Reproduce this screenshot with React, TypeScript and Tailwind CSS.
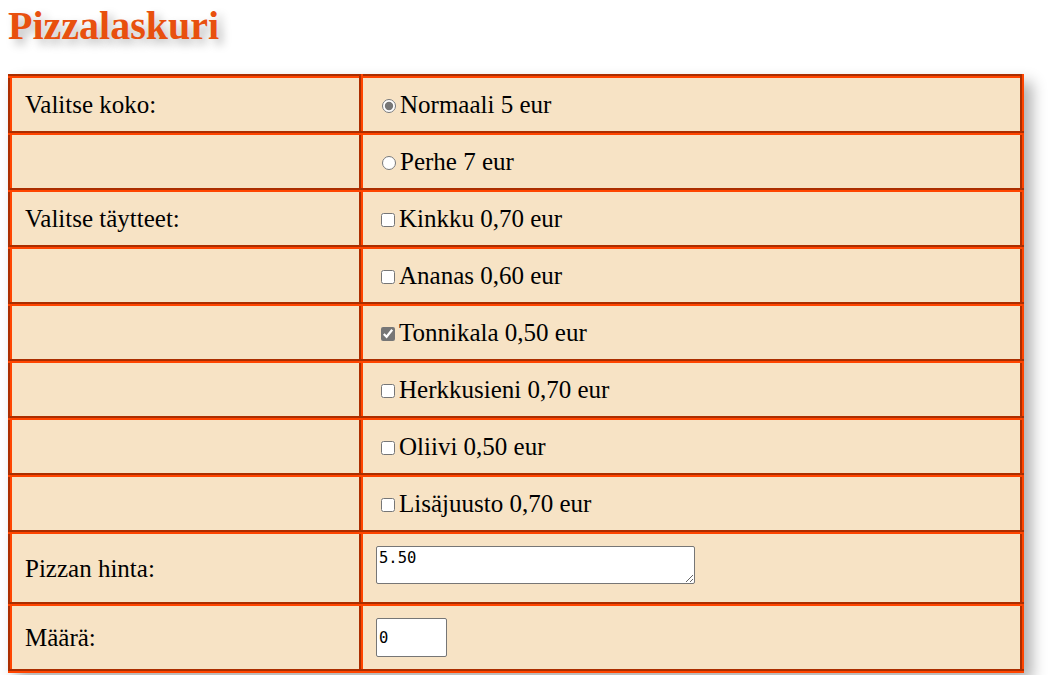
import React from 'react';

const sizes = [
  { label: 'Normaali 5 eur', checked: true },
  { label: 'Perhe 7 eur', checked: false },
];

const toppings = [
  { label: 'Kinkku 0,70 eur', checked: false },
  { label: 'Ananas 0,60 eur', checked: false },
  { label: 'Tonnikala 0,50 eur', checked: true },
  { label: 'Herkkusieni 0,70 eur', checked: false },
  { label: 'Oliivi 0,50 eur', checked: false },
  { label: 'Lisäjuusto 0,70 eur', checked: false },
];

const serif = "font-['Liberation_Serif','Times_New_Roman',serif]";
const cell = `border-4 border-[#ff4500] [border-style:groove] bg-[#f7e3c5] px-[13px] py-[12px] align-middle text-[25px] leading-[29px] font-normal ${serif}`;

export default function App() {
  return (
    <div className={`min-h-screen bg-white px-2 text-black ${serif}`}>
      <h1 className="text-[40px] leading-[52px] font-bold text-[#e8500e] [text-shadow:5px_5px_10px_#b8b8b8]">
        Pizzalaskuri
      </h1>

      <table className={`mt-[22px] w-[1016px] border-collapse shadow-[8px_8px_14px_#b0b0b0] ${serif}`}>
        <tbody>
          {sizes.map((s, i) => (
            <tr key={s.label}>
              <td className={`${cell} w-[351px]`}>{i === 0 ? 'Valitse koko:' : ''}</td>
              <td className={cell}>
                <label>
                  <input
                    type="radio"
                    name="koko"
                    defaultChecked={s.checked}
                    className="mt-[3px] mr-[4px] ml-[6px] h-[14px] w-[14px] accent-[#767676]"
                  />
                  {s.label}
                </label>
              </td>
            </tr>
          ))}

          {toppings.map((t, i) => (
            <tr key={t.label}>
              <td className={cell}>{i === 0 ? 'Valitse täytteet:' : ''}</td>
              <td className={cell}>
                <label>
                  <input
                    type="checkbox"
                    defaultChecked={t.checked}
                    className="my-[3px] mr-[4px] ml-[5px] h-[14px] w-[14px] accent-[#767676]"
                  />
                  {t.label}
                </label>
              </td>
            </tr>
          ))}

          <tr>
            <td className={cell}>Pizzan hinta:</td>
            <td className={cell}>
              <textarea
                readOnly
                defaultValue="5.50"
                className="h-[38px] w-[319px] rounded-[2px] border border-[#767676] bg-white px-[2px] py-[2px] align-baseline font-['DejaVu_Sans_Mono',monospace] text-[15.5px] leading-[18px] text-black"
              />
            </td>
          </tr>

          <tr>
            <td className={cell}>Määrä:</td>
            <td className={cell}>
              <input
                type="text"
                defaultValue="0"
                className="h-[39px] w-[71px] rounded-[2px] border border-[#767676] bg-white px-[2px] align-top font-['DejaVu_Sans_Mono',monospace] text-[15.5px] text-black"
              />
            </td>
          </tr>
        </tbody>
      </table>
    </div>
  );
}
